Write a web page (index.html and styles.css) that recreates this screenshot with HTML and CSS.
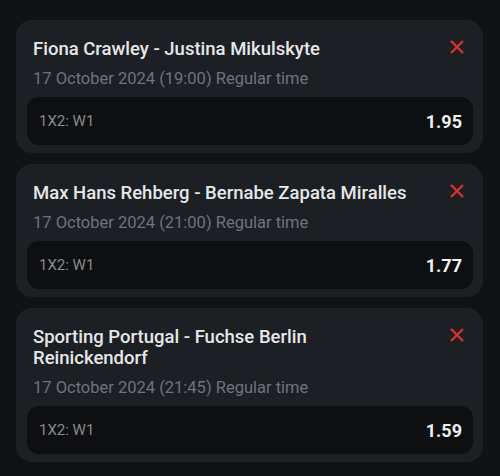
FILE: index.html
```html
<!DOCTYPE html>
<html lang="en">
<head>
    <meta charset="UTF-8">
    <meta name="viewport" content="width=device-width, initial-scale=1.0">
    <title>Bet slip</title>
    <link rel="stylesheet" href="styles.css">
</head>
<body>
    <div class="slip">
        <!-- 投注卡片 -->
        <div class="bet-card">
            <div class="bet-head">
                <div class="bet-info">
                    <div class="bet-title">Fiona Crawley - Justina Mikulskyte</div>
                    <div class="bet-date">17 October 2024 (19:00) Regular time</div>
                </div>
                <div class="remove-button">
                    <svg viewBox="0 0 16 16"><path d="M2 2L14 14M14 2L2 14"/></svg>
                </div>
            </div>
            <div class="bet-odds">
                <span class="market">1X2: W1</span>
                <span class="coef">1.95</span>
            </div>
        </div>

        <div class="bet-card">
            <div class="bet-head">
                <div class="bet-info">
                    <div class="bet-title">Max Hans Rehberg - Bernabe Zapata Miralles</div>
                    <div class="bet-date">17 October 2024 (21:00) Regular time</div>
                </div>
                <div class="remove-button">
                    <svg viewBox="0 0 16 16"><path d="M2 2L14 14M14 2L2 14"/></svg>
                </div>
            </div>
            <div class="bet-odds">
                <span class="market">1X2: W1</span>
                <span class="coef">1.77</span>
            </div>
        </div>

        <div class="bet-card">
            <div class="bet-head">
                <div class="bet-info">
                    <div class="bet-title">Sporting Portugal - Fuchse Berlin Reinickendorf</div>
                    <div class="bet-date">17 October 2024 (21:45) Regular time</div>
                </div>
                <div class="remove-button">
                    <svg viewBox="0 0 16 16"><path d="M2 2L14 14M14 2L2 14"/></svg>
                </div>
            </div>
            <div class="bet-odds">
                <span class="market">1X2: W1</span>
                <span class="coef">1.59</span>
            </div>
        </div>
    </div>
</body>
</html>
```

FILE: styles.css
```css
body {
    margin: 0;
    font-family: Roboto, "Noto Sans", sans-serif;
    background-color: #111213;
    color: #e6e7e9;
}

.slip {
    display: flex;
    flex-direction: column;
    gap: 11px;
    padding: 20px 17px 0 16px;
}

.bet-card {
    background-color: #1c1f24;
    border-radius: 16px;
    padding: 19px 10px 8px 11px;
}

.bet-head {
    display: flex;
    justify-content: space-between;
    align-items: flex-start;
    padding: 0 8px 0 6px;
}

.bet-info {
    flex: 1;
}

.bet-title {
    font-size: 18.5px;
    font-weight: 500;
    line-height: 21px;
}

.bet-date {
    margin-top: 9px;
    font-size: 16.5px;
    line-height: 20px;
    color: #6e7380;
}

.remove-button {
    flex: none;
    width: 16px;
    height: 16px;
    margin-left: 24px;
    cursor: pointer;
}

.remove-button svg {
    width: 16px;
    height: 16px;
    stroke: #d7322e;
    stroke-width: 2.4;
    fill: none;
}

.bet-odds {
    margin-top: 8px;
    height: 48px;
    background-color: #0e0f10;
    border-radius: 12px;
    display: flex;
    justify-content: space-between;
    align-items: center;
    padding: 0 11px 0 12px;
}

.market {
    font-size: 15px;
    color: #878a91;
}

.coef {
    font-size: 18px;
    font-weight: 700;
    color: #f0f1f2;
}
```
